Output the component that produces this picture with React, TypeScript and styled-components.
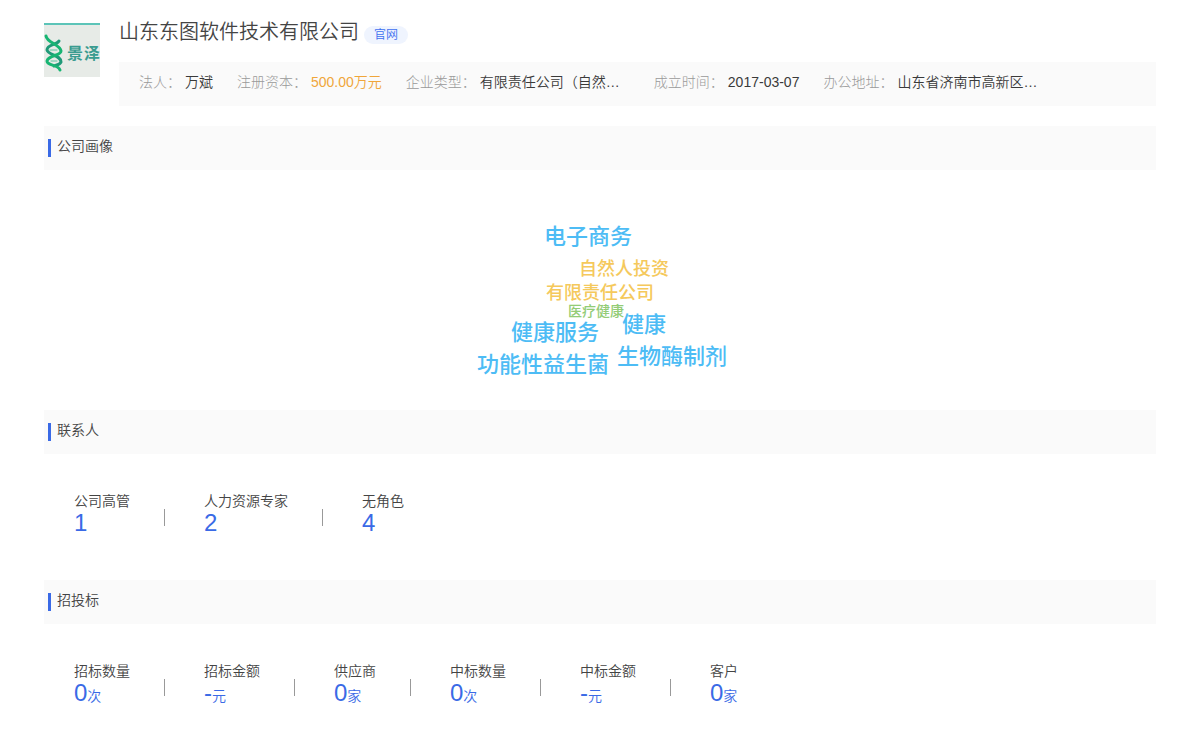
import React from "react";
import styled, { createGlobalStyle } from "styled-components";

const GlobalStyle = createGlobalStyle`
  * { box-sizing: border-box; }
  body {
    margin: 0;
    background: #fff;
    color: #444;
    font-family: "Liberation Sans", "Noto Sans CJK SC", sans-serif;
    font-size: 14px;
    line-height: 20px;
  }
  h1, h2, dl, dt, dd, ul { margin: 0; padding: 0; font-weight: 350; }
`;

const Page = styled.main`
  padding: 20px 44px;
`;

const Header = styled.header`
  display: flex;
  align-items: flex-start;
  gap: 19px;
  margin-bottom: 20px;
`;

const Logo = styled.svg`
  flex: none;
  width: 56px;
  height: 54px;
  margin-top: 3px;
`;

const Company = styled.div`
  flex: 1;
  min-width: 0;
`;

const TitleRow = styled.div`
  display: flex;
  align-items: flex-end;
  gap: 5px;
  height: 24px;
  margin-bottom: 18px;
`;

const Title = styled.h1`
  font-size: 20px;
  line-height: 24px;
`;

const SiteLink = styled.a`
  padding: 0 10px;
  border-radius: 9px;
  background: #eff4fe;
  color: #3f70f0;
  font-size: 12px;
  line-height: 18px;
  font-weight: 350;
  text-decoration: none;
`;

const InfoBar = styled.dl`
  display: flex;
  flex-wrap: wrap;
  gap: 0 24px;
  padding: 10px 20px 14px;
  background: #fafafa;
`;

const InfoItem = styled.div`
  display: flex;
  gap: 4px;
`;

const InfoLabel = styled.dt`
  color: #999;
  font-weight: 300;
`;

const InfoValue = styled.dd<{ $accent?: boolean; $wide?: boolean }>`
  color: ${(p) => (p.$accent ? "#f0a63a" : "#3a3a3a")};
  min-width: ${(p) => (p.$wide ? "150px" : "0")};
`;

const SectionTitle = styled.h2`
  display: flex;
  align-items: flex-start;
  gap: 6px;
  height: 44px;
  padding: 10px 4px;
  background: #fafafa;
  font-size: 14px;
  line-height: 20px;

  &::before {
    content: "";
    width: 3px;
    height: 18px;
    margin-top: 3px;
    background: #3a6ae6;
  }
`;

const Cloud = styled.ul`
  position: relative;
  width: 252px;
  height: 240px;
  margin: 0 auto;
  list-style: none;
`;

const Word = styled.li<{ $x: number; $y: number; $size: number; $color: string }>`
  position: absolute;
  left: ${(p) => p.$x}px;
  top: ${(p) => p.$y}px;
  color: ${(p) => p.$color};
  font-size: ${(p) => p.$size}px;
  line-height: 24px;
  font-weight: 500;
  white-space: nowrap;
`;

const Stats = styled.dl`
  display: flex;
  padding: 36px 30px 44px;
`;

const Stat = styled.div`
  display: flex;
  flex-direction: column;

  &:not(:last-child) {
    padding-right: 35px;
    margin-right: 39px;
    background: linear-gradient(#999, #999) right 19px / 1px 17px no-repeat;
  }
`;

const StatLabel = styled.dt`
  height: 22px;
  line-height: 22px;
`;

const StatValue = styled.dd`
  height: 24px;
  color: #3a6ae6;
  font-size: 24px;
  line-height: 22px;
  white-space: nowrap;
`;

const Unit = styled.span`
  font-size: 14px;
`;

const BLUE = "#4dbcf5";
const YELLOW = "#f5c95c";
const GREEN = "#93cc76";

const info = [
  { label: "法人", value: "万斌" },
  { label: "注册资本", value: "500.00万元", accent: true },
  { label: "企业类型", value: "有限责任公司（自然…", wide: true },
  { label: "成立时间", value: "2017-03-07" },
  { label: "办公地址", value: "山东省济南市高新区…", wide: true },
];

const words = [
  { text: "电子商务", x: 70, y: 55, size: 22, color: BLUE },
  { text: "自然人投资", x: 105, y: 87, size: 18, color: YELLOW },
  { text: "有限责任公司", x: 72, y: 111, size: 18, color: YELLOW },
  { text: "医疗健康", x: 94, y: 129, size: 14, color: GREEN },
  { text: "健康", x: 148, y: 143, size: 22, color: BLUE },
  { text: "健康服务", x: 37, y: 151, size: 22, color: BLUE },
  { text: "生物酶制剂", x: 143, y: 175, size: 22, color: BLUE },
  { text: "功能性益生菌", x: 3, y: 183, size: 22, color: BLUE },
];

interface StatData {
  label: string;
  value: string;
  unit?: string;
}

const contacts: StatData[] = [
  { label: "公司高管", value: "1" },
  { label: "人力资源专家", value: "2" },
  { label: "无角色", value: "4" },
];

const bids: StatData[] = [
  { label: "招标数量", value: "0", unit: "次" },
  { label: "招标金额", value: "-", unit: "元" },
  { label: "供应商", value: "0", unit: "家" },
  { label: "中标数量", value: "0", unit: "次" },
  { label: "中标金额", value: "-", unit: "元" },
  { label: "客户", value: "0", unit: "家" },
];

function CompanyLogo() {
  return (
    <Logo viewBox="0 0 56 54" role="img" aria-label="景泽">
      <rect width="56" height="54" fill="#e7ebe7" />
      <rect width="56" height="2" fill="#5cc4b8" />
      <g fill="none" strokeLinecap="round">
        <path d="M15 18C13 22 3 21 3 27C4 32 17 32 17 39C16 42 12 42 10 43" stroke="#1f9a78" strokeWidth="3" />
        <path d="M2 13C3 20 16 21 17 28C17 33 4 32 3 38C3 43 14 41 16 47" stroke="#18b573" strokeWidth="3" />
        <path d="M6 27L13 27M7 38L13 38" stroke="#5cc4a0" strokeWidth="1" />
      </g>
      <g
        fill="#3a9c90"
        fontSize="16"
        fontWeight="700"
        fontFamily='"Noto Sans CJK SC", sans-serif'
      >
        <text x="23" y="36">景</text>
        <text x="40" y="36">泽</text>
      </g>
    </Logo>
  );
}

function StatList({ items }: { items: StatData[] }) {
  return (
    <Stats>
      {items.map((s) => (
        <Stat key={s.label}>
          <StatLabel>{s.label}</StatLabel>
          <StatValue>
            {s.value}
            {s.unit && <Unit>{s.unit}</Unit>}
          </StatValue>
        </Stat>
      ))}
    </Stats>
  );
}

export default function App() {
  return (
    <>
      <GlobalStyle />
      <Page>
        <Header>
          <CompanyLogo />
          <Company>
            <TitleRow>
              <Title>山东东图软件技术有限公司</Title>
              <SiteLink href="#">官网</SiteLink>
            </TitleRow>
            <InfoBar>
              {info.map((i) => (
                <InfoItem key={i.label}>
                  <InfoLabel>{i.label}：</InfoLabel>
                  <InfoValue $accent={i.accent} $wide={i.wide}>
                    {i.value}
                  </InfoValue>
                </InfoItem>
              ))}
            </InfoBar>
          </Company>
        </Header>
        <section>
          <SectionTitle>公司画像</SectionTitle>
          <Cloud>
            {words.map((w) => (
              <Word key={w.text} $x={w.x} $y={w.y} $size={w.size} $color={w.color}>
                {w.text}
              </Word>
            ))}
          </Cloud>
        </section>
        <section>
          <SectionTitle>联系人</SectionTitle>
          <StatList items={contacts} />
        </section>
        <section>
          <SectionTitle>招投标</SectionTitle>
          <StatList items={bids} />
        </section>
      </Page>
    </>
  );
}
